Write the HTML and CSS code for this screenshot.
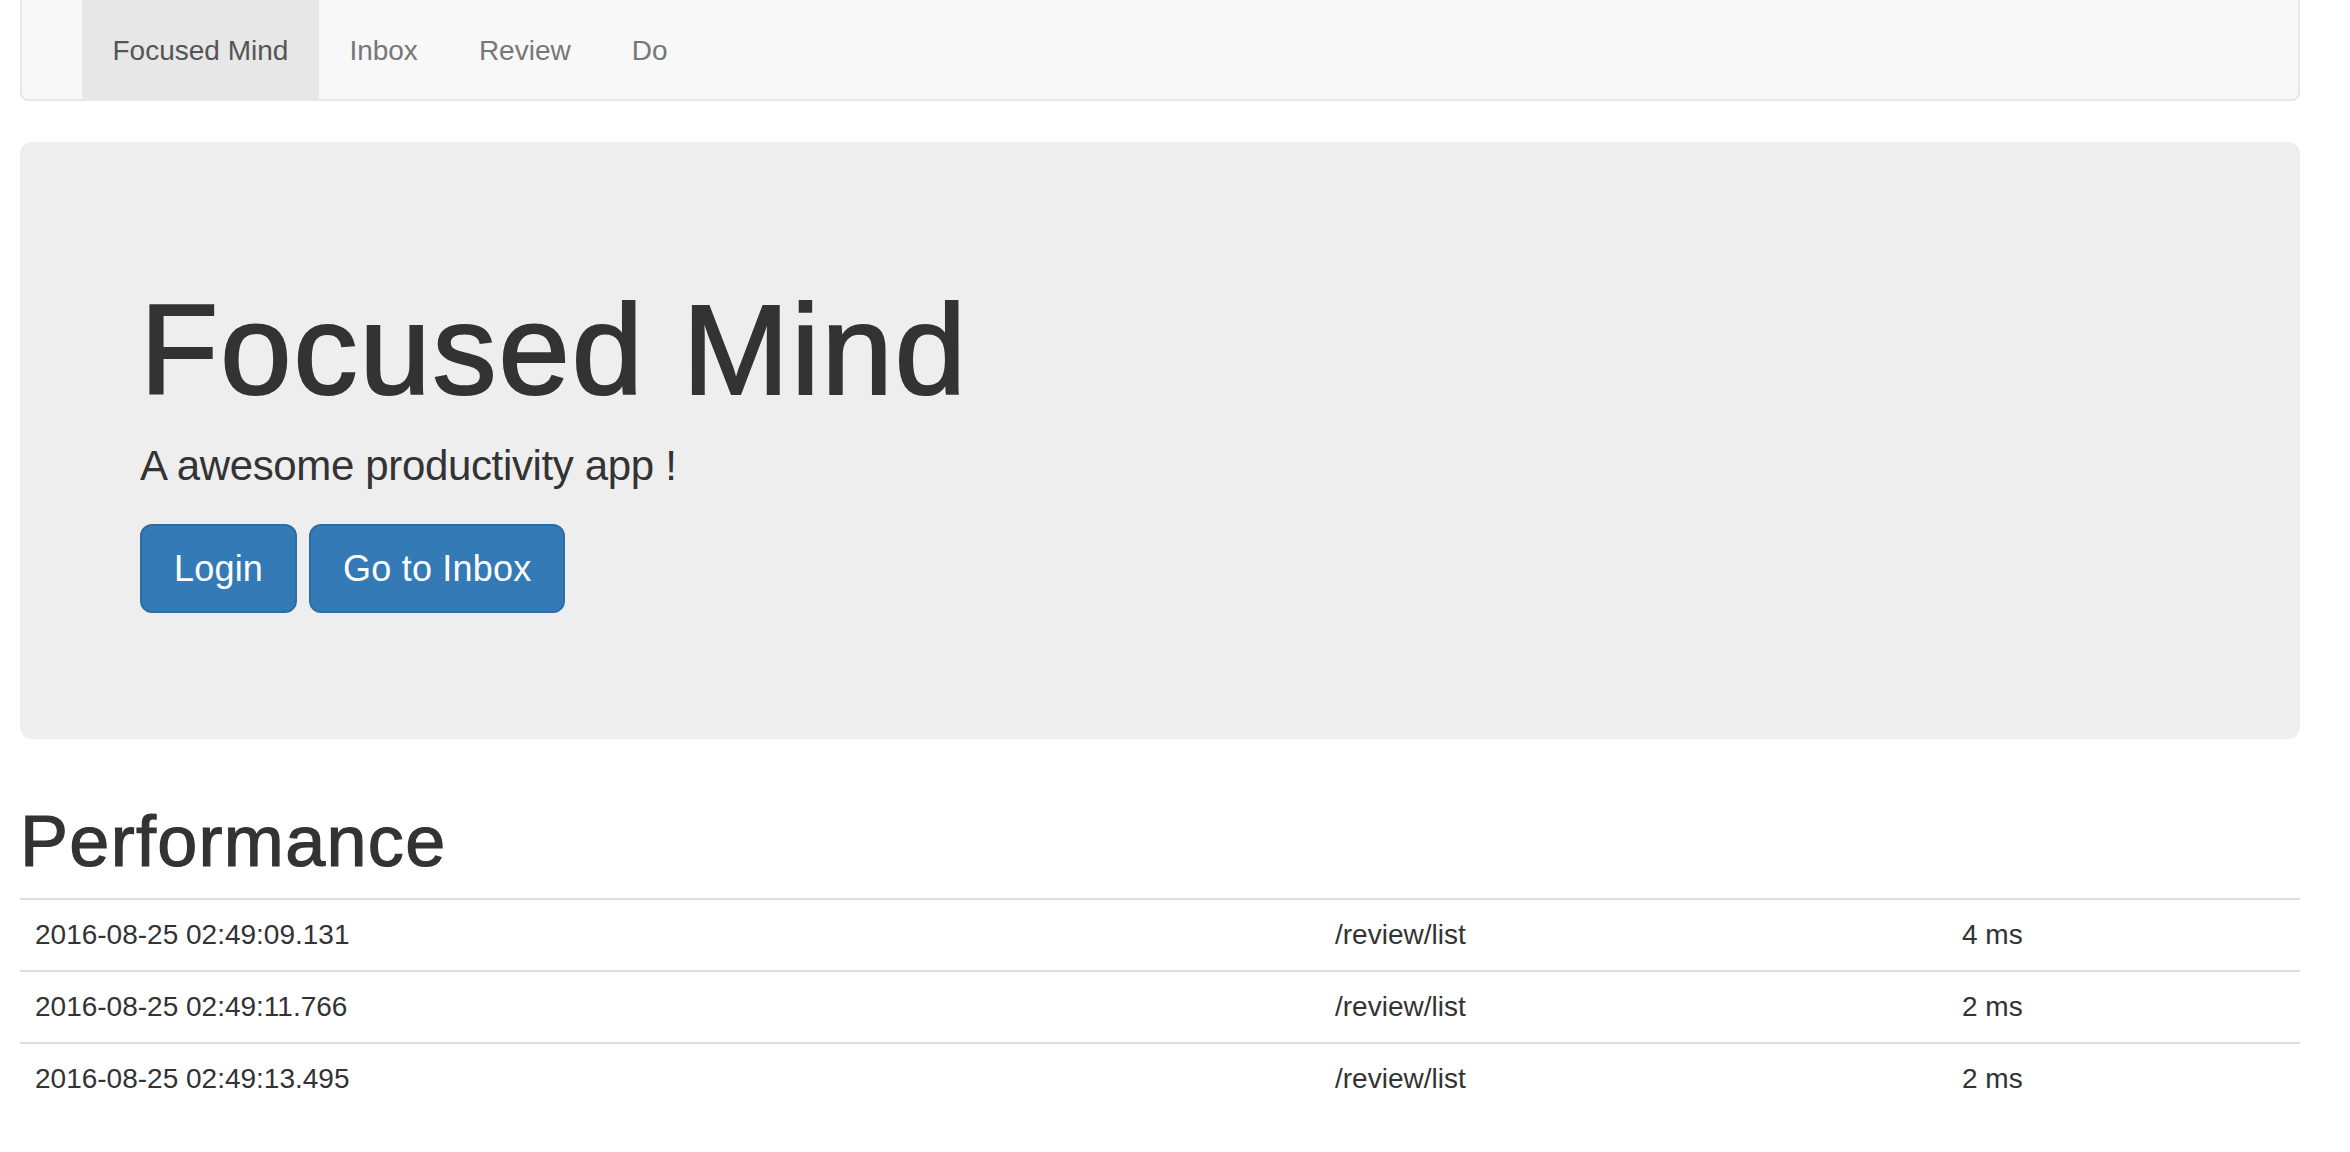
FILE: index.html
```html
<!DOCTYPE html>
<html lang="en">
<head>
<meta charset="utf-8">
<title>Focused Mind</title>
<link rel="stylesheet" href="styles.css">
</head>
<body>
<div class="page">
  <nav class="navbar">
    <ul class="nav">
      <li class="nav-item active"><a href="#">Focused Mind</a></li>
      <li class="nav-item"><a href="#">Inbox</a></li>
      <li class="nav-item"><a href="#">Review</a></li>
      <li class="nav-item"><a href="#">Do</a></li>
    </ul>
  </nav>

  <section class="jumbotron">
    <h1 class="jumbo-title">Focused Mind</h1>
    <p class="lead">A awesome productivity app !</p>
    <div class="actions">
      <a class="btn" href="#">Login</a>
      <a class="btn" href="#">Go to Inbox</a>
    </div>
  </section>

  <h1 class="section-title">Performance</h1>
  <table class="perf">
    <colgroup>
      <col class="col-time">
      <col class="col-path">
      <col class="col-ms">
    </colgroup>
    <tbody>
      <tr><td>2016-08-25 02:49:09.131</td><td>/review/list</td><td>4 ms</td></tr>
      <tr><td>2016-08-25 02:49:11.766</td><td>/review/list</td><td>2 ms</td></tr>
      <tr><td>2016-08-25 02:49:13.495</td><td>/review/list</td><td>2 ms</td></tr>
    </tbody>
  </table>
</div>
</body>
</html>
```

FILE: styles.css
```css
html, body {
  margin: 0;
  padding: 0;
  background: #fff;
}

body {
  font-family: "Liberation Sans", Arial, Helvetica, sans-serif;
  color: #333;
}

.page {
  width: 2280px;
  margin-left: 20px;
}

/* Navbar */
.navbar {
  background: #f8f8f8;
  border: 2px solid #e7e7e7;
  border-top: 0;
  border-radius: 0 0 8px 8px;
  height: 99px;
  margin-bottom: 41px;
}

.nav {
  list-style: none;
  margin: 0;
  padding: 0 0 0 60px;
  display: flex;
  height: 99px;
}

.nav-item a {
  display: block;
  padding: 31px 30.5px 28px;
  font-size: 28px;
  line-height: 40px;
  color: #777;
  text-decoration: none;
}

.nav-item.active a {
  background: #e7e7e7;
  color: #555;
}

/* Jumbotron */
.jumbotron {
  background: #eee;
  border-radius: 12px;
  padding: 96px 120px 96px 120px;
  margin-bottom: 62px;
}

.jumbo-title {
  margin: 43px 0 17px;
  font-size: 128px;
  line-height: 138px;
  font-weight: 400;
  letter-spacing: 2px;
  -webkit-text-stroke: 2.2px #333;
  color: #333;
}

.lead {
  margin: 0 0 28px;
  font-size: 42px;
  line-height: 60px;
  font-weight: 300;
  letter-spacing: -0.35px;
  color: #333;
}

.actions {
  display: flex;
  gap: 12px;
  margin-bottom: 30px;
}

.btn {
  display: inline-flex;
  align-items: center;
  box-sizing: border-box;
  height: 89px;
  padding: 0 32px;
  font-size: 36px;
  letter-spacing: 0.2px;
  color: #fff;
  background: #337ab7;
  border: 2px solid #2e6da4;
  border-radius: 12px;
  text-decoration: none;
}

/* Performance */
.section-title {
  margin: 0 0 17px;
  font-size: 72px;
  line-height: 80px;
  font-weight: 400;
  letter-spacing: 1.3px;
  -webkit-text-stroke: 1.2px #333;
  color: #333;
}

.perf {
  width: 2280px;
  border-collapse: collapse;
  table-layout: fixed;
}

.col-time { width: 1300px; }
.col-path { width: 627px; }
.col-ms { width: 353px; }

.perf td {
  padding: 15px 15px;
  font-size: 28px;
  line-height: 40px;
  border-top: 2px solid #ddd;
  color: #333;
  vertical-align: top;
}
```
